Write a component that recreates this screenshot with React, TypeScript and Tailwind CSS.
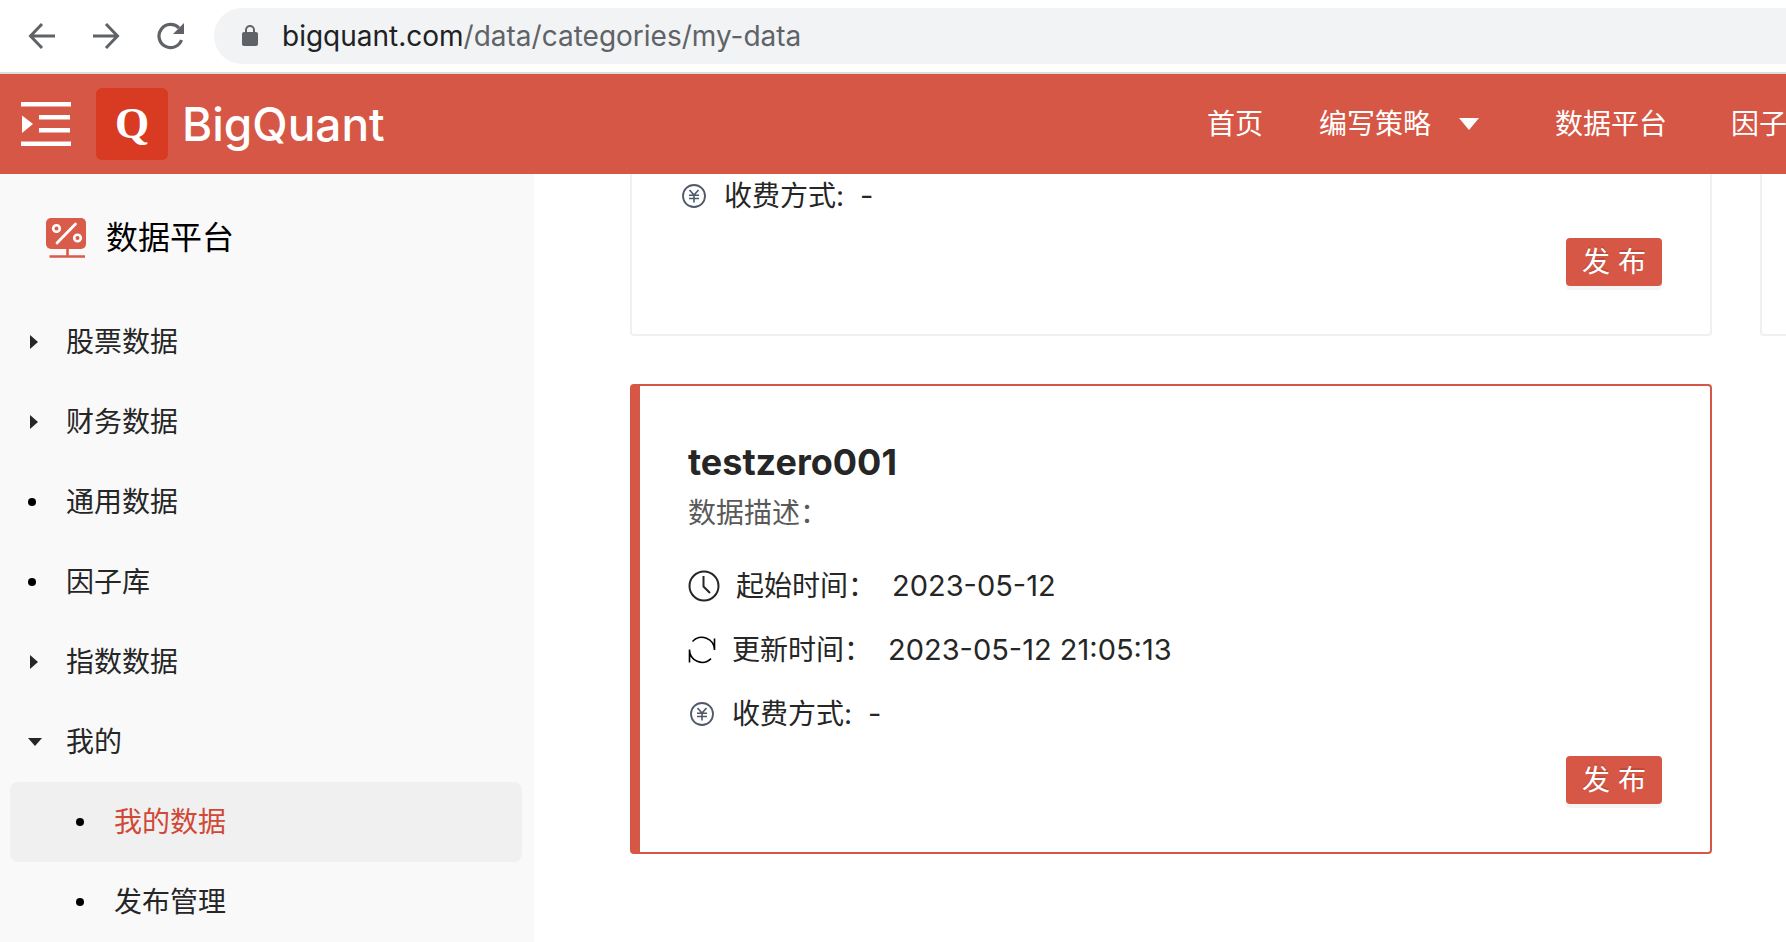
import { ReactNode } from 'react';

interface MenuItem {
    label: string;
    kind: 'leaf' | 'closed' | 'open';
    children?: { label: string; active?: boolean }[];
}

const menu: MenuItem[] = [
    { label: '股票数据', kind: 'closed' },
    { label: '财务数据', kind: 'closed' },
    { label: '通用数据', kind: 'leaf' },
    { label: '因子库', kind: 'leaf' },
    { label: '指数数据', kind: 'closed' },
    { label: '我的', kind: 'open', children: [{ label: '我的数据', active: true }, { label: '发布管理' }] },
];

function BackIcon() {
    return (
        <svg width="28" height="28" viewBox="0 0 28 28" fill="none" stroke="currentColor" strokeWidth="3">
            <path d="M27 14H3M14 2 2.500 14 14 26" />
        </svg>
    );
}

function ForwardIcon() {
    return (
        <svg width="28" height="28" viewBox="0 0 28 28" fill="none" stroke="currentColor" strokeWidth="3">
            <path d="M1 14h24M14 2l11.500 12L14 26" />
        </svg>
    );
}

function ReloadIcon() {
    return (
        <svg width="28" height="28" viewBox="0 0 28 28" fill="none">
            <path d="M25.500 18A11.600 11.600 0 1 1 23 6" stroke="currentColor" strokeWidth="3.200" />
            <path d="M28 1v11H17z" fill="currentColor" />
        </svg>
    );
}

function LockIcon() {
    return (
        <svg width="16" height="22" viewBox="0 0 16 22" fill="none">
            <rect y="7" width="16" height="14" rx="2" fill="currentColor" />
            <path d="M4 8V5a4 4 0 0 1 8 0v3" stroke="currentColor" strokeWidth="2" />
        </svg>
    );
}

function FoldIcon() {
    return (
        <svg width="50" height="44" viewBox="0 0 50 44" fill="white">
            <path d="M0 0h50v4.500H0zM18 13h31v4.500H18zM18 26h31v4.500H18zM0 39.500h50V44H0zM1 13.500l11 8.500-11 9z" />
        </svg>
    );
}

function PlatformIcon() {
    return (
        <svg width="40" height="40" viewBox="0 0 40 40" fill="none">
            <rect width="40" height="31" rx="5" fill="#d95b4a" />
            <path d="M21.500 31v7M3.500 38.500H39" stroke="#d95b4a" strokeWidth="2.600" />
            <path d="M11 25 29.500 6" stroke="white" strokeWidth="2.800" strokeLinecap="round" />
            <circle cx="10.500" cy="10.500" r="3.300" stroke="white" strokeWidth="2.600" />
            <circle cx="31.500" cy="20" r="3.300" stroke="white" strokeWidth="2.600" />
        </svg>
    );
}

function ClockIcon() {
    return (
        <svg width="32" height="32" viewBox="0 0 32 32" fill="none" stroke="currentColor" strokeWidth="2">
            <circle cx="16" cy="16" r="14.500" />
            <path d="M15.500 6v10.500l6.500 6.500" />
        </svg>
    );
}

function SyncIcon() {
    return (
        <svg width="28" height="28" viewBox="0 0 28 28" fill="none" stroke="black" strokeWidth="1.600">
            <path d="M4.500 5.500A12.600 12.600 0 0 1 26.500 14V2.500M23 22.600A12.600 12.600 0 0 1 1.500 13.500V26.500" />
        </svg>
    );
}

function YuanIcon() {
    return (
        <svg width="28" height="28" viewBox="0 0 28 28" fill="none" stroke="#4e5969">
            <circle cx="14" cy="14" r="11" strokeWidth="1.800" />
            <path d="M9.500 8l4.500 5 4.500-5M9 13.200h10M9 16.500h10M14 13v7.500" strokeWidth="1.600" />
        </svg>
    );
}

function CaretRight() {
    return (
        <svg width="8" height="14" viewBox="0 0 8 14" fill="currentColor" className="ml-[2px]">
            <path d="M0 0l8 7-8 7z" />
        </svg>
    );
}

function CaretDown() {
    return (
        <svg width="14" height="8" viewBox="0 0 14 8" fill="currentColor">
            <path d="M0 0h14L7 8z" />
        </svg>
    );
}

function Dot() {
    return <span className="size-2 rounded-full bg-black" />;
}

function PublishButton() {
    return (
        <button
            type="button"
            className="flex h-12 w-24 items-center justify-center gap-2 rounded bg-[#d65745] text-[28px] text-white shadow-[0_4px_0_rgba(0,0,0,0.04)] text-shadow-[0_-2px_0_rgba(0,0,0,0.12)]"
        >
            <span>发</span>
            <span>布</span>
        </button>
    );
}

function InfoRow({ icon, label, value }: { icon: ReactNode; label: string; value: string }) {
    return (
        <div className="flex h-16 items-center gap-4">
            {icon}
            <span>{label}</span>
            <span className="text-[29px]">{value}</span>
        </div>
    );
}

export default function App() {
    return (
        <div className="flex h-screen flex-col overflow-hidden bg-white font-[Inter,'Noto_Sans_CJK_SC',sans-serif] text-[28px] leading-[42px] text-[#262626]">
            <div className="flex h-[74px] shrink-0 items-center border-b-2 border-[#dadce0] pl-7 text-[#5f6368]">
                <button type="button" aria-label="后退">
                    <BackIcon />
                </button>
                <button type="button" aria-label="前进" className="ml-9">
                    <ForwardIcon />
                </button>
                <button type="button" aria-label="刷新" className="ml-9">
                    <ReloadIcon />
                </button>
                <div className="ml-[30px] flex h-14 flex-1 items-center gap-6 rounded-l-full bg-[#f1f3f4] pl-7">
                    <LockIcon />
                    <a href="#">
                        <span className="text-[#202124]">bigquant.com</span>/data/categories/my-data
                    </a>
                </div>
            </div>

            <header className="flex h-[100px] shrink-0 items-center bg-[#d65745] pl-[21px] text-white">
                <button type="button" aria-label="折叠菜单">
                    <FoldIcon />
                </button>
                <a href="#" className="ml-[25px] flex items-center gap-[14px]">
                    <span className="flex size-[72px] items-center justify-center rounded-md bg-[#d93a22] font-['Liberation_Serif',serif] text-[44px] font-bold">
                        Q
                    </span>
                    <span className="text-[46px] font-medium">BigQuant</span>
                </a>
                <nav className="ml-auto flex w-[579px] shrink-0 items-center whitespace-nowrap">
                    <a href="#">首页</a>
                    <a href="#" className="ml-14 flex items-center gap-7">
                        编写策略
                        <svg width="20" height="12" viewBox="0 0 20 12" fill="currentColor">
                            <path d="M0 0h20L10 12z" />
                        </svg>
                    </a>
                    <a href="#" className="ml-[76px]">
                        数据平台
                    </a>
                    <a href="#" className="ml-16">
                        因子
                    </a>
                </nav>
            </header>

            <div className="flex min-h-0 flex-1">
                <aside className="w-[534px] shrink-0 overflow-hidden bg-[#f9f9f9] px-[10px]">
                    <h2 className="flex h-32 items-center gap-5 pl-9 text-[32px] text-black">
                        <PlatformIcon />
                        数据平台
                    </h2>
                    <ul>
                        {menu.map((item) => (
                            <li key={item.label}>
                                <a href="#" className="flex h-20 items-center">
                                    <span className="flex w-14 pl-[18px]">
                                        {item.kind === 'leaf' && <Dot />}
                                        {item.kind === 'closed' && <CaretRight />}
                                        {item.kind === 'open' && <CaretDown />}
                                    </span>
                                    {item.label}
                                </a>
                                {item.children && (
                                    <ul>
                                        {item.children.map((child) => (
                                            <li key={child.label}>
                                                <a
                                                    href="#"
                                                    className={
                                                        child.active
                                                            ? 'mr-[2px] flex h-20 items-center rounded-lg bg-[#f0f0f0] pl-12 text-[#d14836]'
                                                            : 'mr-[2px] flex h-20 items-center pl-12'
                                                    }
                                                >
                                                    <span className="flex w-14 pl-[18px]">
                                                        <Dot />
                                                    </span>
                                                    {child.label}
                                                </a>
                                            </li>
                                        ))}
                                    </ul>
                                )}
                            </li>
                        ))}
                    </ul>
                </aside>

                <main className="min-w-0 flex-1 overflow-hidden pl-24">
                    <div className="flex gap-12">
                        <section className="w-[calc(100%-74px)] shrink-0 rounded-b border-2 border-t-0 border-[#f0f0f0] px-12 pb-12">
                            <div className="-mt-[10px]">
                                <InfoRow icon={<YuanIcon />} label="收费方式:" value="-" />
                            </div>
                            <div className="mt-[10px] flex justify-end">
                                <PublishButton />
                            </div>
                        </section>
                        <section className="w-[calc(100%-74px)] shrink-0 rounded-b border-2 border-t-0 border-[#f0f0f0]" />
                    </div>

                    <section className="mt-12 w-[calc(100%-74px)] rounded border-2 border-l-[10px] border-[#d65745] p-12">
                        <h3 className="text-4xl leading-[56px] font-bold">testzero001</h3>
                        <p className="mt-[2px] mb-5 text-[#595959]">数据描述：</p>
                        <InfoRow icon={<ClockIcon />} label="起始时间：" value="2023-05-12" />
                        <InfoRow icon={<SyncIcon />} label="更新时间：" value="2023-05-12 21:05:13" />
                        <InfoRow icon={<YuanIcon />} label="收费方式:" value="-" />
                        <div className="mt-[10px] flex justify-end">
                            <PublishButton />
                        </div>
                    </section>
                </main>
            </div>
        </div>
    );
}
